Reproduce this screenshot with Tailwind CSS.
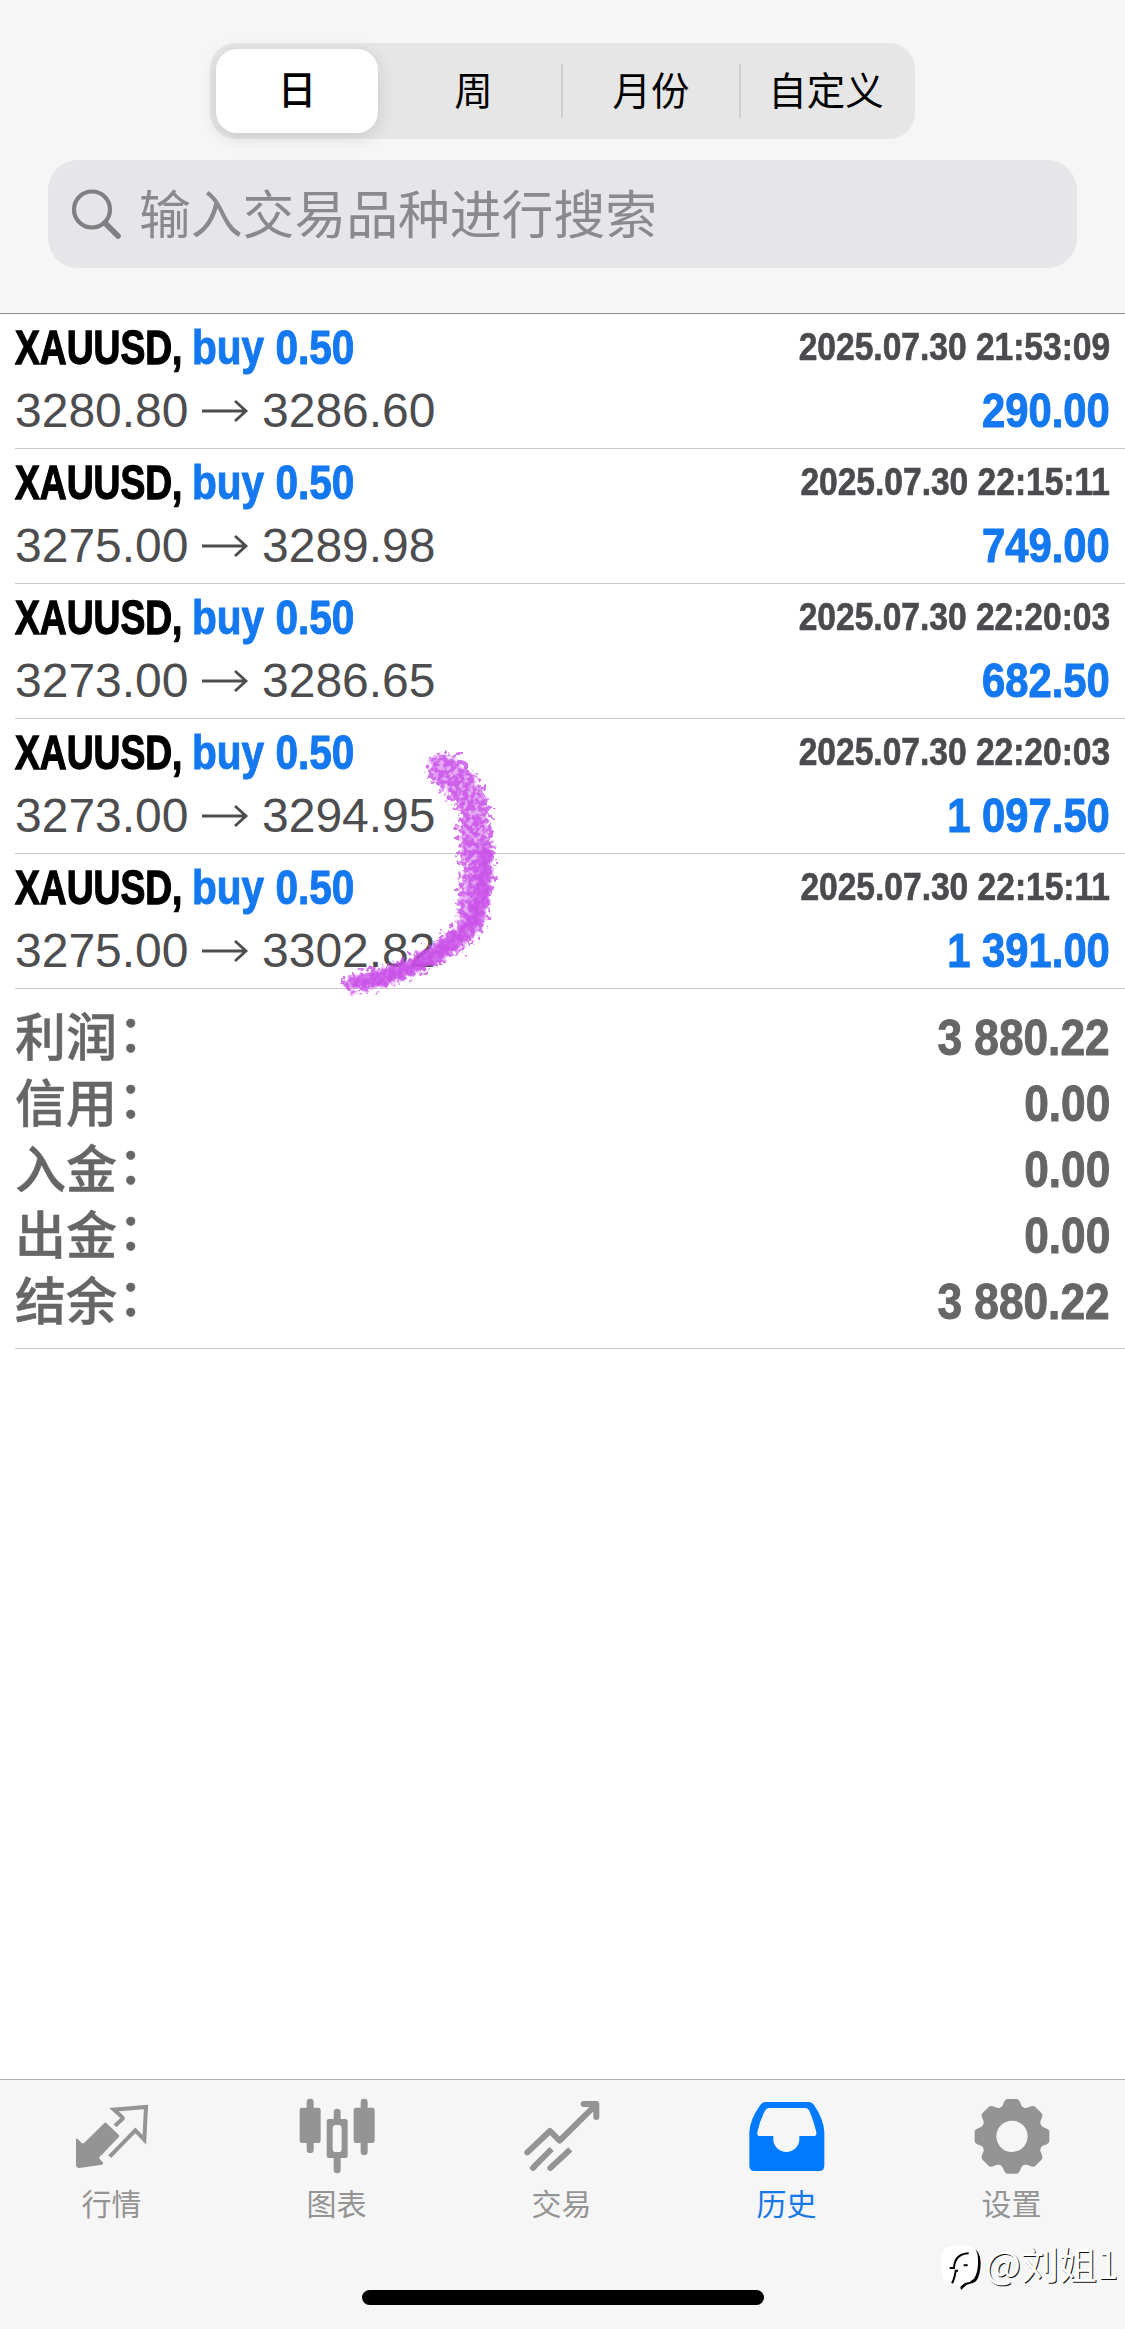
<!DOCTYPE html>
<html lang="zh-CN">
<head>
<meta charset="utf-8">
<title>历史</title>
<script src="https://cdn.jsdelivr.net/npm/@tailwindcss/browser@4"></script>
</head>
<body class="bg-white">
<div class="relative flex h-[2329px] w-[1125px] flex-col overflow-hidden bg-white font-['Liberation_Sans','Noto_Sans_CJK_SC',sans-serif]">
  <header class="flex h-[314px] shrink-0 flex-col items-center border-b border-[#8c8c8c] bg-[#f6f6f6] pt-[43px]">
    <div class="flex h-24 w-[705px] items-center rounded-[26px] bg-[#e6e6e6] pl-1.5 text-[38.5px] leading-none text-black">
      <button class="flex h-[84px] w-[162px] items-center justify-center rounded-[21px] bg-white pt-px font-medium shadow-[0_4px_18px_rgba(0,0,0,0.13)]">日</button>
      <button class="flex h-[54px] w-[185px] items-center justify-center border-r-2 border-[#cfcfd0] pt-0.5 pl-2">周</button>
      <button class="flex h-[54px] w-[178px] items-center justify-center border-r-2 border-[#cfcfd0] pt-0.5">月份</button>
      <button class="flex h-[54px] w-[174px] items-center justify-center pt-0.5 pr-1">自定义</button>
    </div>
    <div class="mt-[21px] flex h-[108px] w-[1029px] items-center rounded-[30px] bg-[#e6e6e8] pl-[23px]">
      <svg class="h-[52px] w-[52px]" viewBox="0 0 52 52" fill="none" stroke="#808083" stroke-linecap="round"><circle cx="21" cy="21.500" r="18" stroke-width="4.2"/><path d="M34 35 47 48" stroke-width="5.6"/></svg>
      <span class="ml-4 pt-1.5 text-[51.8px] leading-none text-[#8a8a8e]">输入交易品种进行搜索</span>
    </div>
  </header>

  <main id="list" class="pl-[15px]"></main>

  <section class="ml-[15px] flex h-[360px] flex-col border-b border-[#c8c8ca] pt-4 text-[#666666]" id="totals"></section>

  <svg class="absolute left-[320px] top-[730px] h-[280px] w-[200px]" viewBox="320 730 200 280">
    <defs>
      <filter id="grain" x="-20%" y="-20%" width="140%" height="140%">
        <feTurbulence type="fractalNoise" baseFrequency="0.2" numOctaves="2" seed="7" result="n"/>
        <feDisplacementMap in="SourceGraphic" in2="n" scale="24" xChannelSelector="R" yChannelSelector="G" result="d"/>
        <feColorMatrix in="n" type="matrix" values="0 0 0 0 0  0 0 0 0 0  0 0 0 0 0  0 0 5 0 -1.7" result="m"/>
        <feComposite in="d" in2="m" operator="in"/>
        <feGaussianBlur stdDeviation="0.7"/>
      </filter>
      <filter id="edge" x="-20%" y="-20%" width="140%" height="140%">
        <feTurbulence type="fractalNoise" baseFrequency="0.22" numOctaves="2" seed="3" result="n"/>
        <feDisplacementMap in="SourceGraphic" in2="n" scale="16" xChannelSelector="R" yChannelSelector="G"/>
        <feGaussianBlur stdDeviation="0.9"/>
      </filter>
    </defs>
    <g transform="translate(-1 1)">
    <path filter="url(#edge)" fill="#cc55ea" opacity=".5" d="M433 760Q446 750 460 761Q480 778 487 805Q493 840 491 885Q488 915 477 932Q455 957 410 975Q375 987 350 988Q342 982 350 977Q385 971 415 957Q445 940 463 920Q458 900 468 870Q462 850 463 810Q448 785 436 778Q428 770 433 760Z"/>
    <path filter="url(#grain)" fill="#c94fe8" opacity=".8" d="M430 758Q446 746 463 758Q484 778 490 805Q497 840 494 885Q492 915 480 934Q455 960 410 978Q375 990 350 991Q340 984 347 974Q385 967 415 954Q445 936 460 918Q456 900 462 870Q458 850 459 812Q446 788 432 780Q424 770 430 758Z"/>
    <path filter="url(#edge)" fill="none" stroke="#c94fe8" stroke-linecap="round" stroke-linejoin="round" opacity=".75" stroke-width="13" d="M484 850Q487 890 474 920Q450 948 410 967Q380 979 356 984"/>
    </g>
  </svg>

  <div class="flex-1"></div>

  <footer class="h-[250px] shrink-0 border-t border-[#b0b0b0] bg-[#f6f6f6]">
    <nav class="-ml-px grid h-[152px] w-[1125px] grid-cols-5 pt-[15px] text-[30px] leading-none text-[#949494]">
      <a class="flex flex-col items-center">
        <svg class="h-20 w-20" viewBox="213 75 240 240" fill="#949494"><path d="M311 158Q314 157 316 159L353 194Q356 198 353 202L295 262Q294 265 297 268L306 278Q308 282 303 284L235 294Q226 294 225 286V207Q227 204 231 208L242 219Q246 222 250 218Z"/><path d="M342 167 364 147Q367 144 363 141L339 119 435 111 430 209 403 181 326 260" fill="none" stroke="#949494" stroke-width="12"/></svg>
        <span class="mt-[15px]">行情</span></a>
      <a class="flex flex-col items-center">
        <svg class="h-20 w-20" viewBox="889 75 240 240" fill="#949494"><rect x="897" y="113" width="63" height="106" rx="7"/><rect x="918" y="86" width="21" height="163" rx="10"/><rect x="1059" y="113" width="63" height="106" rx="7"/><rect x="1080" y="86" width="21" height="169" rx="10"/><path fill-rule="evenodd" d="M999 127a10.500 10.500 0 0 1 21 0v20h14q7 0 7 7v103q0 7-7 7h-14v35a10.500 10.500 0 0 1-21 0v-35h-14q-7 0-7-7V154q0-7 7-7h14ZM996 176v60q0 10 9 10h9q9 0 9-10v-60q0-11-9-11h-9q-9 0-9 11Z"/></svg>
        <span class="mt-[15px]">图表</span></a>
      <a class="flex flex-col items-center">
        <svg class="h-20 w-20" viewBox="65 75 240 240" fill="none" stroke="#949494" stroke-width="18" stroke-linejoin="round"><path stroke-linecap="round" d="M81 247 149 183 178 212 287 104M250 102H288V141"/><path d="M154 237 99 292M210 238 152 292"/><path stroke-linecap="round" d="M98 294l1-1M150 294l1-1"/></svg>
        <span class="mt-[15px]">交易</span></a>
      <a class="flex flex-col items-center text-[#1878ea]">
        <svg class="h-20 w-20" viewBox="740 75 240 240" fill="#007aff"><path fill-rule="evenodd" d="M796 96H924Q935 96 941 105Q970 147 972 187V287Q972 303 956 303H763Q747 303 747 287V187Q749 147 780 105Q786 96 796 96ZM807 114Q799 114 795 121Q779 149 771 187Q769 198 779 198H819V208A39 38 0 0 0 897 208V198H940Q950 198 948 187Q939 149 926 121Q922 114 914 114Z"/></svg>
        <span class="mt-[15px]">历史</span></a>
      <a class="flex flex-col items-center">
        <svg class="h-20 w-20" viewBox="-120 -124 240 240" fill="#949494"><g id="gear"><circle r="70" fill="none" stroke="#949494" stroke-width="46"/></g></svg>
        <span class="mt-[15px]">设置</span></a>
    </nav>
    <div class="mx-auto mt-[58px] h-[15px] w-[402px] rounded-full bg-black"></div>
  </footer>

  <div class="absolute left-[940px] top-[2240px] flex h-[54px] items-center">
    <svg class="h-[50px] w-[44px] shrink-0" viewBox="120 520 132 150"><path fill="#000" d="M150 539Q185 528 222 540Q240 548 242 580Q242 620 228 638Q218 646 200 648L183 664L181 654Q186 643 200 640Z"/><path fill="#fff" d="M125 560Q130 535 150 533Q185 528 215 533Q233 540 234 570Q236 610 222 630Q212 640 195 643L180 654L168 648Q135 648 129 628Q120 600 125 560Z"/><path fill="none" stroke="#000" stroke-width="6" d="M149 598H162Q164 556 206 554M156 644Q164 630 167 606H174M191 590H203"/></svg>
    <span class="ml-px whitespace-nowrap pb-2 text-[38px] leading-none text-white font-['Noto_Sans_CJK_SC',sans-serif] [text-shadow:1px_1px_0_#111]">@刘姐1</span>
  </div>
</div>

<template id="row">
  <article class="flex h-[135px] flex-col border-b border-[#c8c8ca] pr-[15px] pt-[5px]">
    <div class="flex h-[58px] items-center justify-between">
      <div class="flex w-[340px] text-[48px] leading-none font-bold whitespace-nowrap">
        <div class="w-[177px]"><span class="inline-block origin-left scale-x-[0.775] text-black [-webkit-text-stroke:1.3px_#000]">XAUUSD,</span></div>
        <div><span class="inline-block origin-left scale-x-[0.845] text-[#1478f0] [-webkit-text-stroke:1px_#1478f0]">buy 0.50</span></div>
      </div>
      <span data-f="date" class="mb-1 origin-right scale-x-[0.86] text-[39px] leading-none font-bold whitespace-nowrap text-[#4b4b4f] [-webkit-text-stroke:0.7px_#4b4b4f]"></span>
    </div>
    <div class="flex h-[68px] items-center justify-between text-[48px] leading-none">
      <div class="flex items-center text-[#4d4d4f]">
        <span data-f="open" class="w-[186px]"></span>
        <svg class="h-6 w-[48px]" viewBox="0 0 48 24" fill="none" stroke="#4d4d4f" stroke-width="2.8"><path d="M1 12H45M34 2 45 12 34 22"/></svg>
        <span data-f="close" class="ml-[13px]"></span>
      </div>
      <span data-f="profit" class="origin-right scale-x-[0.87] font-bold whitespace-nowrap text-[#1478f0] [-webkit-text-stroke:1px_#1478f0]"></span>
    </div>
  </article>
</template>
<template id="total">
  <div class="flex h-[66px] items-center justify-between pr-[15px]">
    <div class="flex text-[51px] leading-none font-medium [-webkit-text-stroke:0.5px_#666666]"><span data-f="label"></span><span class="-translate-y-[4px] translate-x-px">：</span></div>
    <span data-f="value" class="origin-right scale-x-[0.885] text-[50px] leading-none font-bold whitespace-nowrap [-webkit-text-stroke:1px_#666666]"></span>
  </div>
</template>
<script>
function fill(tpl, target, items) {
  for (const item of items) {
    const node = document.getElementById(tpl).content.cloneNode(true);
    for (const el of node.querySelectorAll('[data-f]')) el.textContent = item[el.dataset.f];
    document.getElementById(target).append(node);
  }
}
fill('row', 'list', [
  {date: '2025.07.30 21:53:09', open: '3280.80', close: '3286.60', profit: '290.00'},
  {date: '2025.07.30 22:15:11', open: '3275.00', close: '3289.98', profit: '749.00'},
  {date: '2025.07.30 22:20:03', open: '3273.00', close: '3286.65', profit: '682.50'},
  {date: '2025.07.30 22:20:03', open: '3273.00', close: '3294.95', profit: '1 097.50'},
  {date: '2025.07.30 22:15:11', open: '3275.00', close: '3302.82', profit: '1 391.00'}
]);
fill('total', 'totals', [
  {label: '利润', value: '3 880.22'},
  {label: '信用', value: '0.00'},
  {label: '入金', value: '0.00'},
  {label: '出金', value: '0.00'},
  {label: '结余', value: '3 880.22'}
]);
const gear = document.getElementById('gear');
for (let a = 0; a < 360; a += 45) {
  const p = document.createElementNS('http://www.w3.org/2000/svg', 'path');
  p.setAttribute('d', 'M-42 -82Q-30 -85 -26 -98Q-21 -112 -14 -112H14Q21 -112 26 -98Q30 -85 42 -82L30 -65H-30Z');
  p.setAttribute('transform', 'rotate(' + a + ')');
  gear.append(p);
}
</script>
</body>
</html>
